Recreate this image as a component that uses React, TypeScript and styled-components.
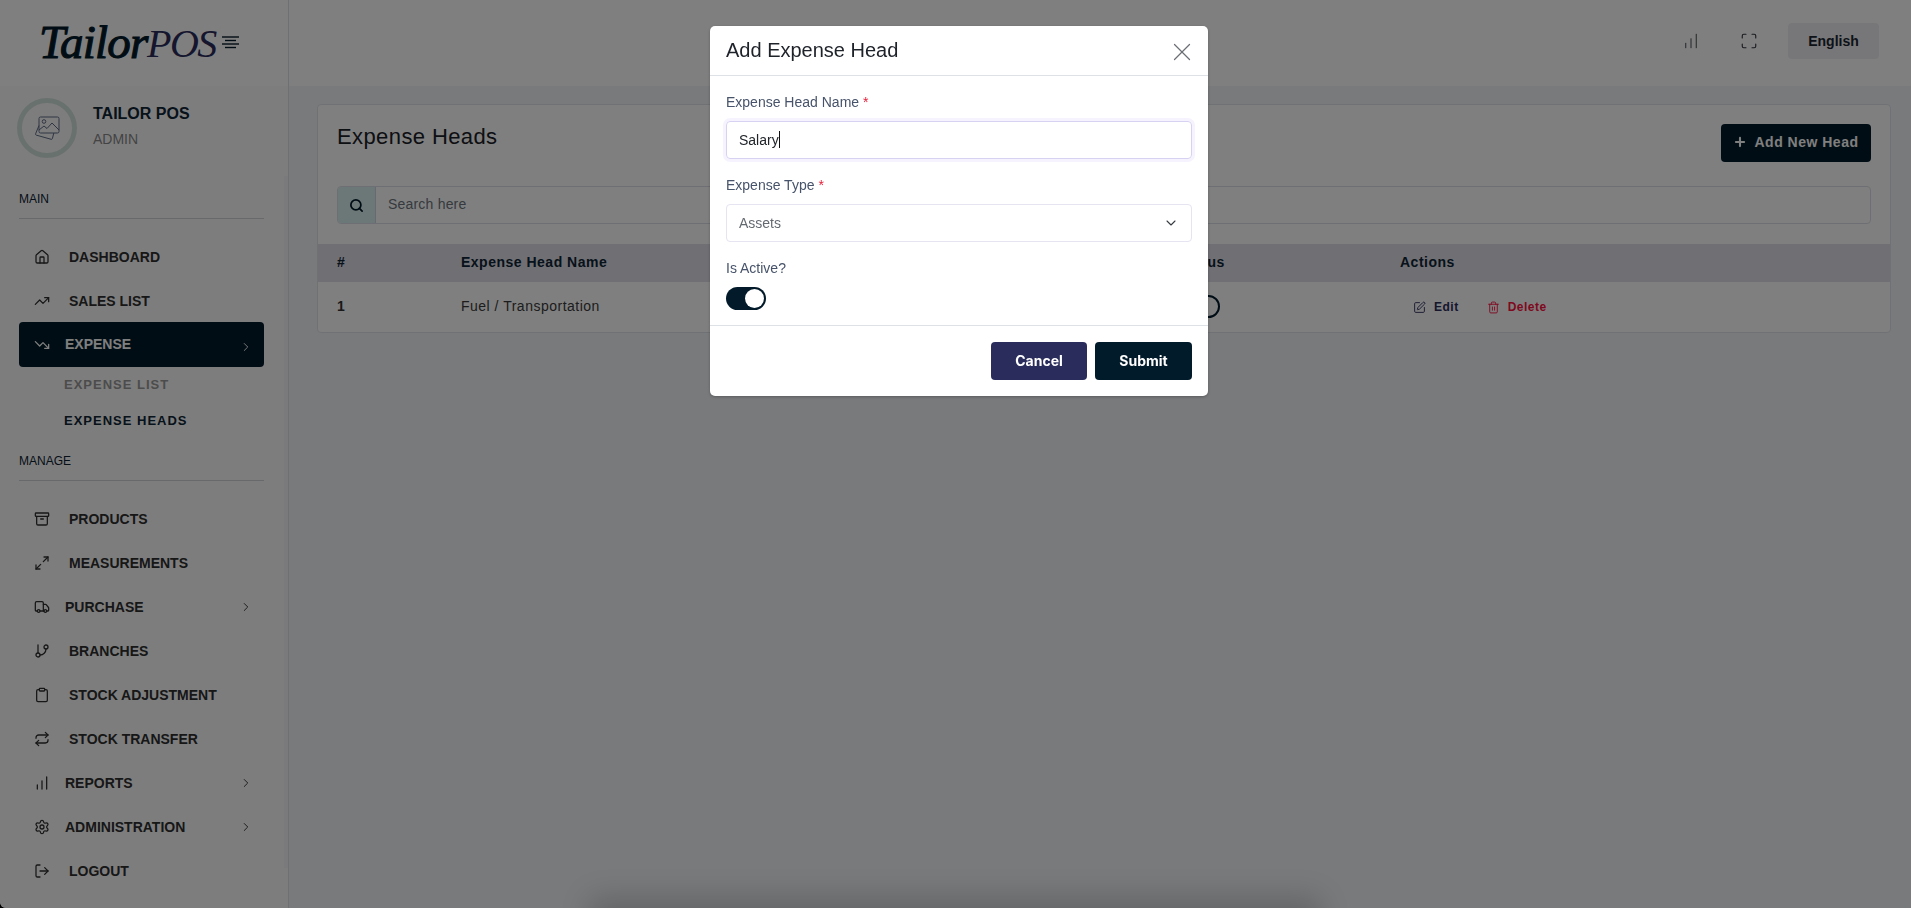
import React from "react";
import styled, { createGlobalStyle } from "styled-components";
import {
  Archive, ChartNoAxesColumnIncreasing, ChevronDown, ChevronRight, Clipboard, GitBranch, Home,
  LogOut, Maximize, Maximize2, Plus, Repeat, Search, Settings, SquarePen, Trash2, TrendingDown, TrendingUp, Truck, X,
} from "lucide-react";

const primary = "#021a2a";

const Global = createGlobalStyle`
  html, body { margin: 0; padding: 0; height: 100%; background: #000; overflow: hidden; }
  body { font-family: "Liberation Sans", Arial, sans-serif; color: #212529; }
  * { box-sizing: border-box; }
`;

const Shell = styled.div`
  display: flex;
  width: 1911px;
  height: 908px;
  overflow: hidden;
  background: #f1f4f8;
  border-bottom-left-radius: 6px;
`;

const Sidebar = styled.aside`
  flex: 0 0 289px;
  height: 908px;
  background: #fbfbfc;
  border-right: 1px solid #dfe1e8;
  position: relative;
`;

const ScrollTrack = styled.div`
  position: absolute;
  right: 0;
  top: 176px;
  width: 4px;
  height: 692px;
  background: #f4f5f8;
`;

const Brand = styled.div`
  height: 86px;
  background: #fff;
  display: flex;
  align-items: center;
  padding: 0 0 2px 39px;
`;

const BrandMain = styled.span`
  display: inline-block;
  width: 108px;
  font: italic 400 47px/1 "Liberation Serif", serif;
  color: ${primary};
  letter-spacing: -0.8px;
  white-space: nowrap;
  -webkit-text-stroke: 1.1px ${primary};
`;

const BrandSub = styled.span`
  display: inline-block;
  width: 65px;
  font: italic 400 40px/1 "Liberation Serif", serif;
  color: #2a2d5c;
  letter-spacing: -1.5px;
  white-space: nowrap;
  position: relative;
  top: 2px;
`;

const MenuGlyph = styled.svg`
  width: 17px;
  height: 13px;
  margin-left: 10px;
  margin-top: 0;
  stroke: ${primary};
  stroke-width: 1.4;
`;

const Profile = styled.div`
  height: 103px;
  display: flex;
  align-items: flex-start;
  padding: 12px 0 0 17px;
`;

const Avatar = styled.div`
  width: 60px;
  height: 60px;
  border-radius: 50%;
  border: 5px solid #d3e3de;
  background: #fbfbfc;
  display: flex;
  align-items: center;
  justify-content: center;
`;

const AvatarGlyph = styled.svg`
  width: 26px;
  height: 24px;
  fill: none;
  stroke: #5f6b86;
  stroke-width: 1;
  stroke-linejoin: round;
`;

const ProfileText = styled.div`
  margin-left: 16px;
  padding-top: 6px;
`;

const ProfileName = styled.div`
  font-size: 16px;
  font-weight: 700;
  line-height: 20px;
  color: #0e2434;
`;

const ProfileRole = styled.div`
  font-size: 14px;
  line-height: 20px;
  margin-top: 5px;
  color: #888;
`;

const SectionLabel = styled.div<{ $top: number }>`
  margin: ${(p) => p.$top}px 24px 0 19px;
  height: 30px;
  padding-bottom: 10px;
  font-size: 12px;
  line-height: 20px;
  color: #0b2130;
  border-bottom: 1px solid #d0d2d6;
`;

const NavList = styled.nav`
  margin-top: 16px;
`;

const NavRow = styled.div<{ $active?: boolean }>`
  height: ${(p) => (p.$active ? 45 : 44)}px;
  margin: ${(p) => (p.$active ? "-1px 24px 0 19px" : "0 24px 0 19px")};
  padding: 0 11px 0 15px;
  display: flex;
  align-items: center;
  border-radius: 4px;
  background: ${(p) => (p.$active ? primary : "transparent")};
  color: ${(p) => (p.$active ? "#fff" : "#2e2e2e")};
`;

const NavIcon = styled.span`
  width: 16px;
  height: 16px;
  display: flex;
  align-items: center;
  justify-content: center;
  flex: none;
`;

const NavText = styled.span<{ $sub?: boolean; $active?: boolean }>`
  margin-left: ${(p) => (p.$sub ? 15 : 19)}px;
  font-size: 14px;
  font-weight: 700;
  line-height: 20px;
  flex: 1;
  padding-bottom: ${(p) => (p.$active ? 2 : 0)}px;
`;

const RowChevron = styled.span<{ $active?: boolean }>`
  display: flex;
  padding-top: ${(p) => (p.$active ? 4 : 0)}px;
`;

const SubList = styled.div`
  display: flex;
  flex-direction: column;
  margin-top: -1px;
`;

const SubRow = styled.div<{ $current?: boolean }>`
  height: 36px;
  padding-left: 64px;
  display: flex;
  align-items: center;
  font-size: 13px;
  font-weight: 700;
  letter-spacing: 1px;
  color: ${(p) => (p.$current ? "#0e2434" : "#999")};
`;

const Main = styled.main`
  flex: 1;
  min-width: 0;
  display: flex;
  flex-direction: column;
`;

const TopBar = styled.header`
  height: 86px;
  flex: none;
  background: #fff;
  display: flex;
  align-items: center;
  justify-content: flex-end;
  padding: 0 32px 4px 0;
  color: #30343c;
`;

const TopIcon = styled.span<{ $right: number }>`
  display: flex;
  margin-right: ${(p) => p.$right}px;
`;

const LangButton = styled.div`
  width: 91px;
  height: 36px;
  border-radius: 4px;
  background: #eeeff2;
  display: flex;
  align-items: center;
  justify-content: center;
  font-size: 14px;
  font-weight: 700;
  color: #1b2530;
`;

const Content = styled.div`
  padding: 18px 20px 0 28px;
`;

const Card = styled.section`
  background: #fff;
  border: 1px solid #e1e3ea;
  border-radius: 4px;
  height: 229px;
`;

const CardHead = styled.div`
  display: flex;
  justify-content: space-between;
  align-items: flex-start;
  padding: 19px 19px 0 19px;
`;

const CardTitle = styled.h2`
  margin: 0;
  padding-top: 1px;
  font-size: 22px;
  font-weight: 400;
  line-height: 24px;
  letter-spacing: 0.4px;
  color: #1a2027;
`;

const AddButton = styled.div`
  width: 150px;
  height: 38px;
  background: ${primary};
  border-radius: 4px;
  color: #fff;
  font-size: 14px;
  font-weight: 700;
  letter-spacing: 0.5px;
  display: flex;
  align-items: center;
  justify-content: center;
  gap: 7px;
  padding-bottom: 2px;
`;

const SearchBar = styled.div`
  display: flex;
  height: 38px;
  margin: 24px 19px 0 19px;
  border: 1px solid #dcdfe8;
  border-radius: 4px;
  overflow: hidden;
`;

const SearchAddon = styled.div`
  width: 38px;
  background: #d8f0ef;
  border-right: 1px solid #cfd6e0;
  display: flex;
  align-items: center;
  justify-content: center;
  color: ${primary};
`;

const SearchPlaceholder = styled.div`
  flex: 1;
  padding: 0 0 2px 12px;
  display: flex;
  align-items: center;
  font-size: 14px;
  color: #6c757d;
  letter-spacing: 0.2px;
`;

const TableRow = styled.div<{ $head?: boolean }>`
  display: grid;
  grid-template-columns: 124px 718px 221px 1fr;
  align-items: center;
  height: ${(p) => (p.$head ? 38 : 50)}px;
  margin-top: ${(p) => (p.$head ? 20 : 0)}px;
  padding: 0 0 2px 19px;
  background: ${(p) => (p.$head ? "#e0dfe9" : "transparent")};
  font-size: 14px;
  letter-spacing: 0.5px;
  font-weight: ${(p) => (p.$head ? 700 : 400)};
  color: ${(p) => (p.$head ? "#0e2434" : "#3a3a3a")};
`;

const RowIndex = styled.span`
  font-weight: 700;
  color: #333;
`;

const MiniSwitch = styled.span`
  display: block;
  width: 41px;
  height: 23px;
  border-radius: 12px;
  border: 2px solid ${primary};
  background: #fff;
`;

const Actions = styled.div`
  display: flex;
  align-items: center;
  padding: 2px 0 0 13px;
`;

const ActionLink = styled.span<{ $danger?: boolean }>`
  display: flex;
  align-items: center;
  gap: 8px;
  font-size: 12px;
  font-weight: 700;
  letter-spacing: 0.5px;
  margin-right: 28px;
  color: ${(p) => (p.$danger ? "#ff1040" : "#2a2d5c")};
`;

const Backdrop = styled.div`
  position: fixed;
  inset: 0;
  background: rgba(0, 0, 0, 0.5);
`;

const DockShadow = styled.div`
  position: fixed;
  left: 600px;
  width: 710px;
  bottom: -24px;
  height: 24px;
  box-shadow: 0 0 30px 10px rgba(0, 0, 0, 0.18);
`;

const ModalLayer = styled.div`
  position: fixed;
  inset: 0;
  display: flex;
  justify-content: center;
  align-items: flex-start;
  padding: 26px 0 0 7px;
`;

const Modal = styled.div`
  width: 498px;
  height: 370px;
  background: #fff;
  border-radius: 5px;
  box-shadow: 0 1px 3px rgba(0, 0, 0, 0.25);
  display: flex;
  flex-direction: column;
`;

const ModalHead = styled.div`
  height: 50px;
  flex: none;
  display: flex;
  align-items: center;
  justify-content: space-between;
  padding: 0 11px 0 16px;
  border-bottom: 1px solid #dee2e6;
  color: #1e2229;
`;

const ModalTitle = styled.h3`
  margin: 0;
  font-size: 20px;
  font-weight: 400;
  line-height: 24px;
  position: relative;
  top: -1px;
`;

const CloseButton = styled.span`
  display: flex;
  color: #6b6f75;
  padding-top: 3px;
`;

const ModalBody = styled.div`
  height: 250px;
  flex: none;
  padding: 16px 16px 0;
  border-bottom: 1px solid #dee2e6;
`;

const Field = styled.div`
  margin-bottom: 16px;
`;

const FieldLabel = styled.div`
  font-size: 14px;
  line-height: 21px;
  margin-bottom: 8px;
  color: #47536a;
`;

const Req = styled.span`
  color: #e8203a;
  margin-left: 4px;
`;

const TextBox = styled.div<{ $focus?: boolean }>`
  height: 38px;
  border: 1px solid ${(p) => (p.$focus ? "#d8d2f2" : "#e5e4f0")};
  border-radius: 4px;
  padding: 0 12px 1px;
  display: flex;
  align-items: center;
  font-size: 14px;
  color: ${(p) => (p.$focus ? "#212529" : "#646970")};
  box-shadow: ${(p) => (p.$focus ? "0 0 0 3px #f6f3fe" : "none")};
`;

const Caret = styled.span`
  width: 1px;
  height: 17px;
  background: #111;
`;

const SelectIcon = styled.span`
  margin-left: auto;
  display: flex;
  color: #343a40;
`;

const Toggle = styled.div`
  width: 40px;
  height: 23px;
  border-radius: 12px;
  background: ${primary};
  display: flex;
  align-items: center;
  justify-content: flex-end;
  padding-right: 2px;
`;

const ToggleKnob = styled.span`
  width: 19px;
  height: 19px;
  border-radius: 50%;
  background: #fff;
`;

const ModalFoot = styled.div`
  flex: 1;
  display: flex;
  justify-content: flex-end;
  gap: 8px;
  padding: 16px 16px 0;
`;

const FootButton = styled.div<{ $tone: string; $w: number }>`
  width: ${(p) => p.$w}px;
  height: 38px;
  border-radius: 4px;
  background: ${(p) => p.$tone};
  color: #fff;
  font-family: Inter, "Liberation Sans", sans-serif;
  font-size: 14px;
  font-weight: 700;
  display: flex;
  align-items: center;
  justify-content: center;
  padding-bottom: 2px;
`;

type Item = { label: string; icon: React.ReactNode; chevron?: boolean };
const ic = { size: 18, strokeWidth: 1.9 };

const mainItems: Item[] = [
  { label: "DASHBOARD", icon: <Home {...ic} /> },
  { label: "SALES LIST", icon: <TrendingUp {...ic} /> },
];
const manageItems: Item[] = [
  { label: "PRODUCTS", icon: <Archive {...ic} /> },
  { label: "MEASUREMENTS", icon: <Maximize2 {...ic} /> },
  { label: "PURCHASE", icon: <Truck {...ic} />, chevron: true },
  { label: "BRANCHES", icon: <GitBranch {...ic} /> },
  { label: "STOCK ADJUSTMENT", icon: <Clipboard {...ic} /> },
  { label: "STOCK TRANSFER", icon: <Repeat {...ic} /> },
  { label: "REPORTS", icon: <ChartNoAxesColumnIncreasing {...ic} />, chevron: true },
  { label: "ADMINISTRATION", icon: <Settings {...ic} />, chevron: true },
  { label: "LOGOUT", icon: <LogOut {...ic} /> },
];

const Row = ({ item, active }: { item: Item; active?: boolean }) => (
  <NavRow $active={active}>
    <NavIcon>{item.icon}</NavIcon>
    <NavText $sub={item.chevron} $active={active}>{item.label}</NavText>
    {item.chevron && (
      <RowChevron $active={active}>
        <ChevronRight size={14} strokeWidth={1.6} />
      </RowChevron>
    )}
  </NavRow>
);

export default function App() {
  return (
    <>
      <Global />
      <Shell>
        <Sidebar>
          <ScrollTrack />
          <Brand>
            <BrandMain>Tailor</BrandMain>
            <BrandSub>POS</BrandSub>
            <MenuGlyph viewBox="0 0 17 13" aria-hidden>
              <line x1="0" y1="1" x2="17" y2="1" />
              <line x1="3" y1="4.5" x2="14" y2="4.5" />
              <line x1="0" y1="8" x2="17" y2="8" />
              <line x1="3" y1="11.5" x2="14" y2="11.5" />
            </MenuGlyph>
          </Brand>
          <Profile>
            <Avatar>
              <AvatarGlyph viewBox="0 0 26 24" aria-hidden>
                <rect x="5" y="1" width="20" height="16" rx="1.5" />
                <circle cx="10" cy="5.5" r="1.8" />
                <path d="M5 14l5-4 3 2.5 5-5.5 7 7" />
                <path d="M5 9.5L1.6 17.8a1 1 0 0 0 .6 1.3l15 4.2a1 1 0 0 0 1.2-.7l1.4-5.6" />
              </AvatarGlyph>
            </Avatar>
            <ProfileText>
              <ProfileName>TAILOR POS</ProfileName>
              <ProfileRole>ADMIN</ProfileRole>
            </ProfileText>
          </Profile>
          <SectionLabel $top={0}>MAIN</SectionLabel>
          <NavList>
            {mainItems.map((i) => (
              <Row key={i.label} item={i} />
            ))}
            <Row item={{ label: "EXPENSE", icon: <TrendingDown {...ic} />, chevron: true }} active />
            <SubList>
              <SubRow>EXPENSE LIST</SubRow>
              <SubRow $current>EXPENSE HEADS</SubRow>
            </SubList>
          </NavList>
          <SectionLabel $top={13}>MANAGE</SectionLabel>
          <NavList>
            {manageItems.map((i) => (
              <Row key={i.label} item={i} />
            ))}
          </NavList>
        </Sidebar>
        <Main>
          <TopBar>
            <TopIcon $right={40}>
              <ChartNoAxesColumnIncreasing size={18} strokeWidth={1.2} />
            </TopIcon>
            <TopIcon $right={30}>
              <Maximize size={18} strokeWidth={1.5} />
            </TopIcon>
            <LangButton>English</LangButton>
          </TopBar>
          <Content>
            <Card>
              <CardHead>
                <CardTitle>Expense Heads</CardTitle>
                <AddButton>
                  <Plus size={14} strokeWidth={3.6} />
                  Add New Head
                </AddButton>
              </CardHead>
              <SearchBar>
                <SearchAddon>
                  <Search size={15} strokeWidth={2.8} />
                </SearchAddon>
                <SearchPlaceholder>Search here</SearchPlaceholder>
              </SearchBar>
              <TableRow $head>
                <span>#</span>
                <span>Expense Head Name</span>
                <span>Status</span>
                <span>Actions</span>
              </TableRow>
              <TableRow>
                <RowIndex>1</RowIndex>
                <span>Fuel / Transportation</span>
                <MiniSwitch />
                <Actions>
                  <ActionLink>
                    <SquarePen size={13} strokeWidth={1.7} />
                    Edit
                  </ActionLink>
                  <ActionLink $danger>
                    <Trash2 size={13} strokeWidth={1.7} />
                    Delete
                  </ActionLink>
                </Actions>
              </TableRow>
            </Card>
          </Content>
        </Main>
      </Shell>
      <Backdrop />
      <DockShadow />
      <ModalLayer>
        <Modal>
          <ModalHead>
            <ModalTitle>Add Expense Head</ModalTitle>
            <CloseButton>
              <X size={30} strokeWidth={1} />
            </CloseButton>
          </ModalHead>
          <ModalBody>
            <Field>
              <FieldLabel>
                Expense Head Name<Req>*</Req>
              </FieldLabel>
              <TextBox $focus>
                Salary
                <Caret />
              </TextBox>
            </Field>
            <Field>
              <FieldLabel>
                Expense Type<Req>*</Req>
              </FieldLabel>
              <TextBox>
                Assets
                <SelectIcon>
                  <ChevronDown size={16} strokeWidth={1.6} />
                </SelectIcon>
              </TextBox>
            </Field>
            <FieldLabel>Is Active?</FieldLabel>
            <Toggle>
              <ToggleKnob />
            </Toggle>
          </ModalBody>
          <ModalFoot>
            <FootButton $tone="#2a2d5c" $w={96}>Cancel</FootButton>
            <FootButton $tone="#021b2b" $w={97}>Submit</FootButton>
          </ModalFoot>
        </Modal>
      </ModalLayer>
    </>
  );
}
